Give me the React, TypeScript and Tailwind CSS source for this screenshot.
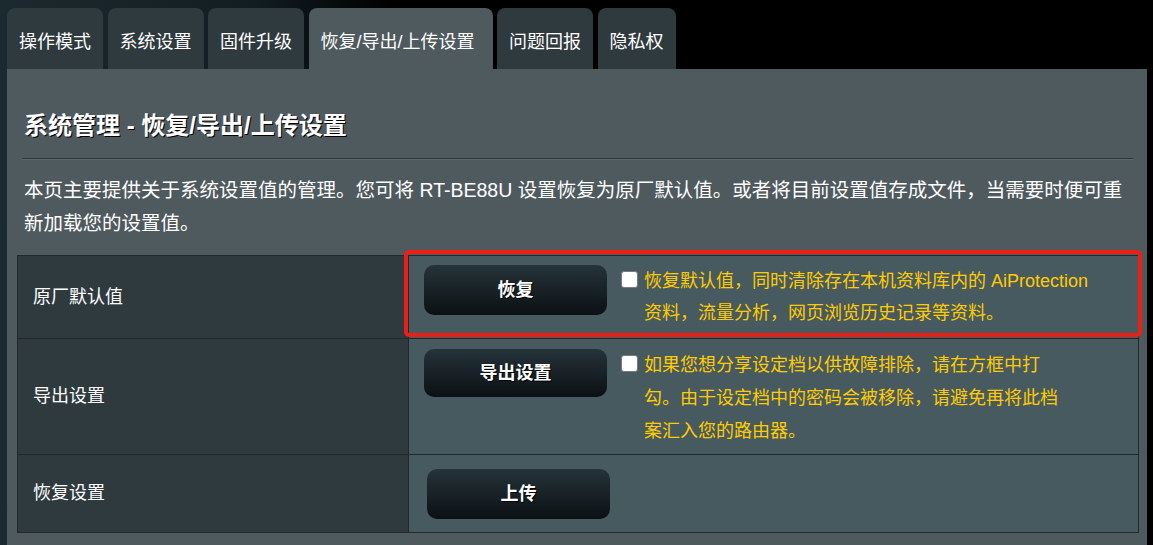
import React from 'react';

const tabs = ['操作模式', '系统设置', '固件升级', '恢复/导出/上传设置', '问题回报', '隐私权'];
const activeTab = 3;

const ActionButton: React.FC<{ label: string; className?: string }> = ({ label, className = '' }) => (
  <button
    type="button"
    className={`w-[183px] shrink-0 rounded-[10px] bg-[linear-gradient(#25333a,#0b1013)] text-[18px] font-bold text-white [text-shadow:1px_1px_0_#000] ${className}`}
  >
    {label}
  </button>
);

const Check: React.FC<{ className?: string }> = ({ className = '' }) => (
  <input
    type="checkbox"
    className={`ml-[14px] h-[17px] w-[17px] shrink-0 appearance-none rounded-[3px] border border-[#7a7a7a] bg-white ${className}`}
  />
);

const App: React.FC = () => {
  return (
    <div className="h-[545px] w-[1153px] overflow-hidden bg-[linear-gradient(90deg,#1b2a30_0%,#121d22_22%,#000_34%)] pl-[7px] pr-[6px] pt-2 font-['Liberation_Sans','Noto_Sans_CJK_SC',sans-serif]">
      <div className="flex gap-[4.5px]">
        {tabs.map((tab, i) => (
          <div
            key={tab}
            className={`flex h-[61px] items-center rounded-t-[8px] pl-3 pt-[7px] text-[18px] text-white ${
              i === activeTab ? 'bg-[#4f5a5f] pr-[18px]' : 'bg-[#2f3a3f] pr-3'
            }`}
          >
            {tab}
          </div>
        ))}
      </div>

      <div className="h-full bg-[#4f5a5f] pl-[10px] pr-[8px] pt-[41px]">
        <h1 className="pl-[7px] text-[24px] font-bold leading-8 text-white [text-shadow:1px_1px_0_#000]">
          系统管理 - 恢复/导出/上传设置
        </h1>
        <div className="ml-[5px] mr-[6px] mt-[16px] border-t border-b border-t-[#2c363b] border-b-[#5d676c]" />

        <p className="mt-[14px] whitespace-nowrap pl-[7px] text-[19.5px] leading-[33px] text-white">
          本页主要提供关于系统设置值的管理。您可将 RT-BE88U 设置恢复为原厂默认值。或者将目前设置值存成文件，当需要时便可重
          <br />
          新加载您的设置值。
        </p>

        <div className="relative mt-[15px]">
          <table className="w-full border-collapse">
            <tbody>
              <tr>
                <th className="w-[391px] border border-[#22292c] bg-[#2f3a3f] pl-[15px] text-left text-[18px] font-normal text-white">
                  原厂默认值
                </th>
                <td className="border border-[#22292c] bg-[#475a60] py-[9px] pl-[15px]">
                  <div className="flex items-start">
                    <ActionButton label="恢复" className="h-[50px]" />
                    <Check className="mt-[6px]" />
                    <p className="ml-[6px] whitespace-nowrap text-[18px] leading-8 text-[#ffcc00]">
                      恢复默认值，同时清除存在本机资料库内的 AiProtection
                      <br />
                      资料，流量分析，网页浏览历史记录等资料。
                    </p>
                  </div>
                </td>
              </tr>
              <tr>
                <th className="border border-[#22292c] bg-[#2f3a3f] pl-[15px] text-left text-[18px] font-normal text-white">
                  导出设置
                </th>
                <td className="border border-[#22292c] bg-[#475a60] pb-[6px] pl-[15px] pt-[10px]">
                  <div className="flex items-start">
                    <ActionButton label="导出设置" className="h-[48px]" />
                    <Check className="mt-[6px]" />
                    <p className="ml-[6px] whitespace-nowrap text-[18px] leading-[33px] text-[#ffcc00]">
                      如果您想分享设定档以供故障排除，请在方框中打
                      <br />
                      勾。由于设定档中的密码会被移除，请避免再将此档
                      <br />
                      案汇入您的路由器。
                    </p>
                  </div>
                </td>
              </tr>
              <tr>
                <th className="border border-[#22292c] bg-[#2f3a3f] pl-[15px] text-left text-[18px] font-normal text-white">
                  恢复设置
                </th>
                <td className="border border-[#22292c] bg-[#475a60] pb-[13px] pl-[18px] pt-[14px]">
                  <ActionButton label="上传" className="h-[50px]" />
                </td>
              </tr>
            </tbody>
          </table>
          <div className="pointer-events-none absolute left-[387px] top-[-5px] h-[87px] w-[738px] rounded-[5px] border-4 border-[#ec1f17]" />
        </div>
      </div>
    </div>
  );
};

export default App;
